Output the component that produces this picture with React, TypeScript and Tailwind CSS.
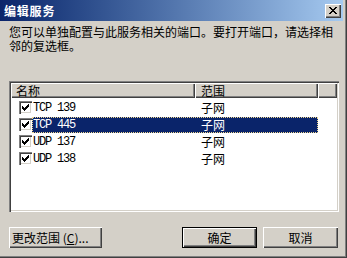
const rows = [
  { name: 'TCP 139', scope: '子网', selected: false },
  { name: 'TCP 445', scope: '子网', selected: true },
  { name: 'UDP 137', scope: '子网', selected: false },
  { name: 'UDP 138', scope: '子网', selected: false },
];

const raised =
  'shadow-[inset_1px_1px_#ffffff,inset_-1px_-1px_#404040,inset_-2px_-2px_#808080]';

const Check = () => (
  <div className="w-[13px] h-[13px] bg-white shrink-0 shadow-[inset_1px_1px_#808080,inset_2px_2px_#404040,inset_-1px_-1px_#ffffff,inset_-2px_-2px_#d4d0c8] flex items-center justify-center">
    <svg width="7" height="7" viewBox="0 0 7 7" shapeRendering="crispEdges">
      <path
        d="M6 0h1v1h-1zM5 1h2v1h-2zM0 2h1v1h-1zM4 2h3v1h-3zM0 3h2v1h-2zM3 3h3v1h-3zM0 4h5v1h-5zM1 5h3v1h-3zM2 6h1v1h-1z"
        fill="#000"
      />
    </svg>
  </div>
);

const App = () => {
  return (
    <div
      className="w-[347px] h-[258px] bg-[#d4d0c8] flex flex-col shadow-[inset_-1px_-1px_#404040,inset_-2px_-2px_#808080] text-[12px] text-black"
      style={{ fontFamily: '"Noto Sans CJK SC", "Liberation Sans", sans-serif' }}
    >
      {/* Title bar */}
      <div className="h-[21px] w-[343px] flex items-center justify-between pl-[4px] pr-[2px] bg-gradient-to-r from-[#0a246a] to-[#a6caf0]">
        <span className="text-white font-bold text-[12px] tracking-[0.8px] leading-none">编辑服务</span>
        <div className={`w-[16px] h-[14px] bg-[#d4d0c8] flex items-center justify-center ${raised}`}>
          <svg width="8" height="7" viewBox="0 0 8 7" shapeRendering="crispEdges">
            <path
              d="M0 0h2v1h-2zM6 0h2v1h-2zM1 1h2v1h-2zM5 1h2v1h-2zM2 2h4v1h-4zM3 3h2v1h-2zM2 4h4v1h-4zM1 5h2v1h-2zM5 5h2v1h-2zM0 6h2v1h-2zM6 6h2v1h-2z"
              fill="#000"
            />
          </svg>
        </div>
      </div>

      {/* Description */}
      <p className="ml-[9px] mt-[4px] w-[330px] leading-[14px]">
        您可以单独配置与此服务相关的端口。要打开端口，请选择相邻的复选框。
      </p>

      {/* List view */}
      <div className="ml-[9px] mt-[28px] w-[330px] h-[131px] p-[2px] bg-white shadow-[inset_1px_1px_#808080,inset_2px_2px_#404040,inset_-1px_-1px_#ffffff,inset_-2px_-2px_#d4d0c8] flex flex-col">
        <div className="flex h-[15px] bg-[#d4d0c8] leading-[15px]">
          <div className={`w-[184px] pl-[5px] ${raised}`}>名称</div>
          <div className={`w-[123px] pl-[6px] ${raised}`}>范围</div>
          <div className={`flex-1 ${raised}`} />
        </div>
        <div className="flex flex-col pt-[1px]">
          {rows.map((r) => (
            <div key={r.name} className="flex items-center h-[17px]">
              <div className="ml-[8px] w-[13px] shrink-0">
                <Check />
              </div>
              <div
                className={`flex h-[16px] items-center ${
                  r.selected ? 'bg-[#0a246a] text-white outline-1 outline-dotted outline-[#f0d890] -outline-offset-1' : ''
                }`}
              >
                <div
                  className="w-[163px] pl-[1px] text-[12px] tracking-[-1.2px]"
                  style={{ fontFamily: '"Liberation Mono", monospace' }}
                >
                  {r.name}
                </div>
                <div className="w-[123px] pl-[6px]">{r.scope}</div>
              </div>
            </div>
          ))}
        </div>
      </div>

      {/* Buttons */}
      <div className="flex mt-[15px] ml-[9px] w-[329px] h-[21px]">
        <button className={`w-[93px] h-[21px] bg-[#d4d0c8] pl-[3px] text-left ${raised}`}>
          更改范围 (<span className="underline">C</span>)...
        </button>
        <div className="flex-1" />
        <button className="w-[75px] h-[21px] bg-[#d4d0c8] border border-black shadow-[inset_1px_1px_#ffffff,inset_-1px_-1px_#404040,inset_-2px_-2px_#808080]">
          确定
        </button>
        <button className={`ml-[6px] w-[75px] h-[21px] bg-[#d4d0c8] ${raised}`}>取消</button>
      </div>
    </div>
  );
};

export default App;
